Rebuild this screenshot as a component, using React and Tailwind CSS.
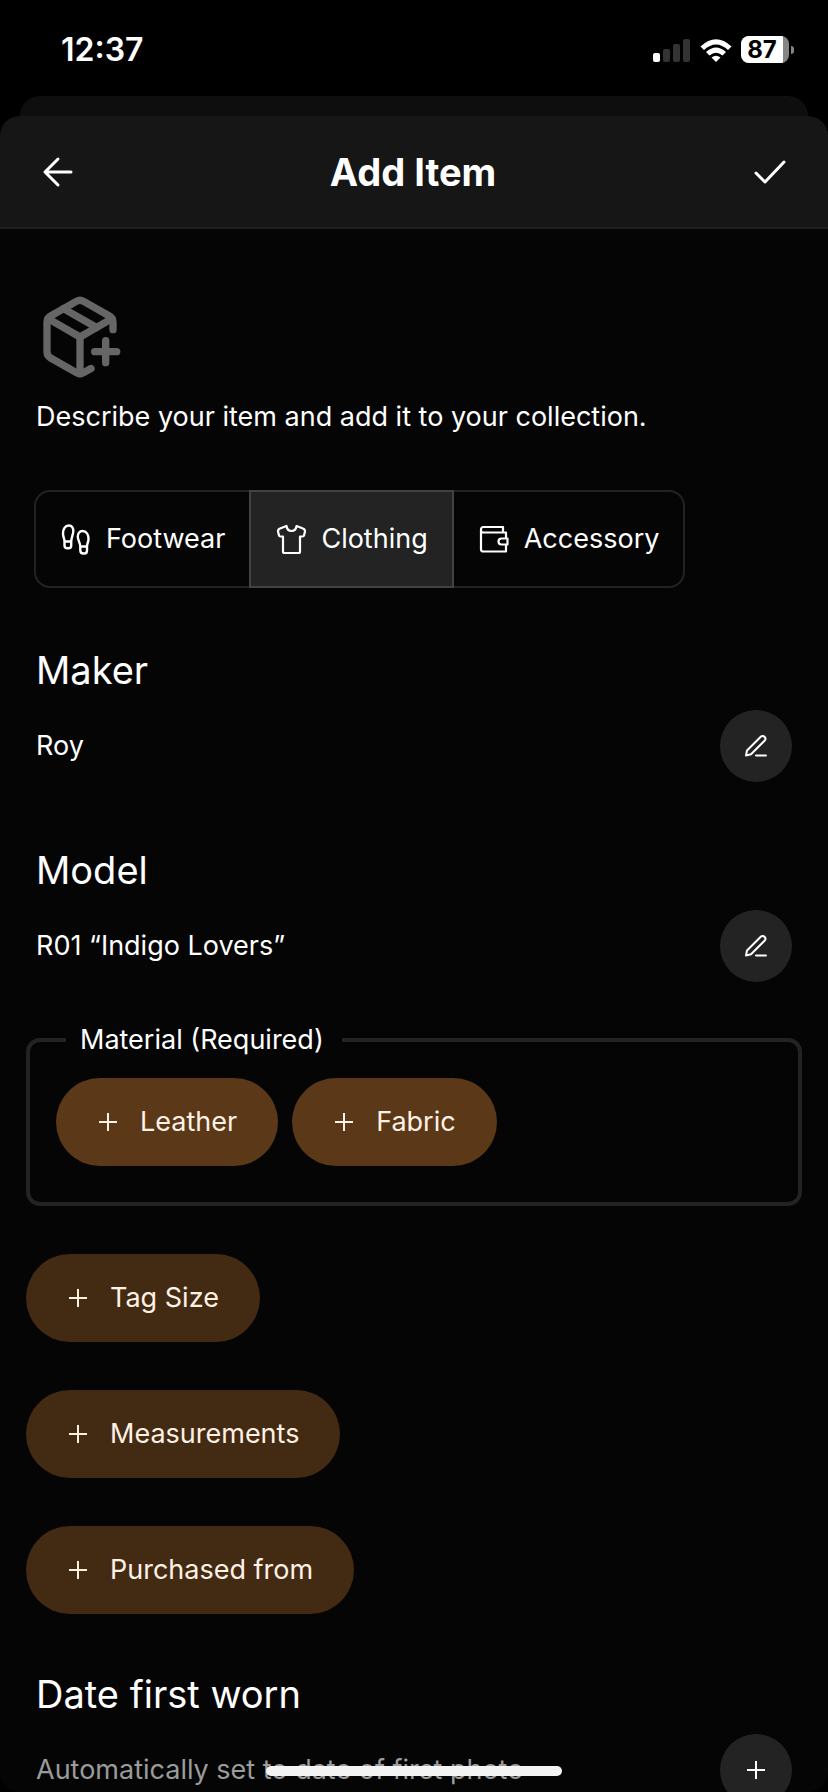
import { useState } from "react";
import { PackagePlus } from "lucide-react";

const categories = [
    { id: "footwear", label: "Footwear", Icon: FootprintsIcon },
    { id: "clothing", label: "Clothing", Icon: ShirtIcon },
    { id: "accessory", label: "Accessory", Icon: WalletIcon },
];

const stroke = {
    fill: "none",
    stroke: "currentColor",
    strokeLinecap: "round",
    strokeLinejoin: "round",
    "aria-hidden": true,
};

function ArrowIcon() {
    return (
        <svg viewBox="0 0 32 32" className="size-8" strokeWidth="3" {...stroke}>
            <path d="M29 16H3M16 3L3 16l13 13" />
        </svg>
    );
}

function CheckIcon() {
    return (
        <svg viewBox="0 0 36 32" className="h-8 w-9" strokeWidth="3" {...stroke}>
            <path d="M4 17l9 9L32 6" />
        </svg>
    );
}

function FootprintsIcon() {
    return (
        <svg viewBox="0 0 32 32" className="size-8" strokeWidth="2.4" {...stroke}>
            <path d="M4.500 18.500C4.500 15.500 3 14 3 10.500C3 6 5 2.500 8.800 2.500C12 2.500 13.500 5 13.300 8.500C13 12 11.200 15 11.200 18.500V22.500C11.200 24.300 10 25.300 8.500 25.300H7.500C5.500 25.300 4.500 24 4.500 22.500ZM4.500 18.500H11.200" />
            <path d="M20.300 23.500C20.300 20 18 17.500 17.800 14C17.600 10.500 19.500 8 22.500 8C26.500 8 28.500 11.500 28.500 16C28.500 19 27 20.500 27 23.500V27.500C27 29.500 26 30.500 24.500 30.500H23.500C21.500 30.500 20.300 29.500 20.300 27.500ZM20.300 23.500H27" />
        </svg>
    );
}

function ShirtIcon() {
    return (
        <svg viewBox="0 0 32 32" className="size-8" strokeWidth="2.2" {...stroke}>
            <path d="M11.500 3C12 6.500 14 8 16.500 8S21 6.500 21.500 3L28 5.500C29.500 6 30 7 30 8.500L29 12.500C28.800 13.300 28.500 13.500 27.500 13.500H25V28.500C25 29.700 24.500 30 23.500 30H9.500C8.500 30 8 29.700 8 28.500V13.500H5.500C4.500 13.500 4.200 13.300 4 12.500L3 8.500C3 7 3.500 6 5 5.500Z" />
        </svg>
    );
}

function WalletIcon() {
    return (
        <svg viewBox="0 0 32 32" className="size-8" strokeWidth="2.2" {...stroke}>
            <path d="M28 15V9.500H5.500M28 22V28.500H5.500C3.800 28.500 3 28 3 26.500V6.500C3 5 3.800 4 5.500 4H25V9.500M5.500 9.500C3.800 9.500 3 8.800 3 7.500" />
            <path d="M29.500 15.500H23.500C21.500 15.500 20.500 17 20.500 18.500S21.500 21.500 23.500 21.500H29.500Z" />
        </svg>
    );
}

function PencilIcon() {
    return (
        <svg viewBox="0 0 24 24" className="size-6" strokeWidth="2" {...stroke}>
            <path d="M12 21.500H22" />
            <path d="M2 21.500L3 16.500L16.500 3C17.800 1.700 19.500 1.700 20.500 2.700S21.700 5.500 20.500 6.800L7 20.300Z" />
        </svg>
    );
}

function PlusIcon() {
    return (
        <svg viewBox="0 0 20 20" className="size-5" fill="none" stroke="currentColor" strokeWidth="2" aria-hidden="true">
            <path d="M1 10H19M10 1V19" />
        </svg>
    );
}

function StatusBar() {
    return (
        <div className="flex h-24 items-start justify-between pt-8 pr-[34px] pl-[61px]">
            <span className="text-[32px] leading-9 font-semibold">12:37</span>
            <div className="flex items-center gap-2 pt-1">
                <svg viewBox="0 0 38 24" className="h-6 w-[38px]" aria-hidden="true">
                    <rect x="0" y="15" width="7" height="9" rx="2" fill="#fff" />
                    <rect x="10" y="11" width="7" height="13" rx="2" fill="#333" />
                    <rect x="20" y="6" width="7" height="18" rx="2" fill="#333" />
                    <rect x="30" y="1" width="7" height="23" rx="2" fill="#333" />
                </svg>
                <svg viewBox="0 0 34 26" className="h-[26px] w-[34px]" aria-hidden="true">
                    <path d="M1.500 9.500Q17-5 32.500 9.500L29 13Q17 2 5 13Z" fill="#fff" />
                    <path d="M7 15Q17 6 27 15L23.500 18.500Q17 13 10.500 18.500Z" fill="#fff" />
                    <path d="M12.500 20.500Q17 17 21.500 20.500L17 25Z" fill="#fff" />
                </svg>
                <div className="flex items-center gap-0.5">
                    <div className="h-[27px] w-12 overflow-hidden rounded-lg bg-[#858585]">
                        <div className="flex h-full w-[42px] items-center justify-center bg-white text-[24px] font-bold text-black">87</div>
                    </div>
                    <div className="h-2 w-[3px] rounded-r-full bg-[#858585]" />
                </div>
            </div>
        </div>
    );
}

function Field({ title, value, muted, action, children }) {
    return (
        <section className="px-9">
            <h2 className="text-[38px] leading-12">{title}</h2>
            <div className="mt-4 flex h-18 items-center justify-between">
                <p className={muted ? "text-[#9b9b9b]" : ""}>{value}</p>
                <button type="button" aria-label={action} className="flex size-18 items-center justify-center rounded-full bg-[#232323]">
                    {children}
                </button>
            </div>
        </section>
    );
}

function Chip({ label, className }) {
    return (
        <button type="button" className={`flex h-22 items-center gap-[22px] rounded-full pr-[41px] pl-[42px] text-[#fff1e4] ${className}`}>
            <PlusIcon />
            {label}
        </button>
    );
}

export default function App() {
    const [category, setCategory] = useState("clothing");

    return (
        <div className="h-screen overflow-hidden bg-black font-['Inter','Liberation_Sans',sans-serif] text-[27px] leading-9 text-white">
            <StatusBar />
            <div className="mx-5 h-5 rounded-t-[20px] bg-[#0e0e0e]" />

            <div className="h-[calc(100vh-116px)] overflow-hidden rounded-[20px] bg-[#050505]">
                <header className="flex h-[113px] items-center justify-between border-b-2 border-[#1e1e1e] bg-[#161616] pr-10 pl-[42px]">
                    <button type="button" aria-label="Back"><ArrowIcon /></button>
                    <h1 className="text-[38px] font-bold">Add Item</h1>
                    <button type="button" aria-label="Save"><CheckIcon /></button>
                </header>

                <main>
                    <div className="px-9 pt-16">
                        <PackagePlus className="size-22 text-[#666]" strokeWidth={2} />
                        <p className="mt-[18px]">Describe your item and add it to your collection.</p>
                    </div>

                    <div className="mt-[55px] ml-[34px] flex h-[98px] w-fit">
                        {categories.map(({ id, label, Icon }) => (
                            <button
                                key={id}
                                type="button"
                                aria-pressed={category === id}
                                onClick={() => setCategory(id)}
                                className={`-ml-0.5 flex items-center gap-3.5 border-2 px-6 first:ml-0 first:rounded-l-2xl last:rounded-r-2xl ${
                                    category === id ? "z-10 border-[#424242] bg-[#232323]" : "border-[#232323]"
                                }`}
                            >
                                <Icon />
                                {label}
                            </button>
                        ))}
                    </div>

                    <div className="mt-[58px] flex flex-col gap-16">
                        <Field title="Maker" value="Roy" action="Edit maker"><PencilIcon /></Field>
                        <Field title="Model" value="R01 “Indigo Lovers”" action="Edit model"><PencilIcon /></Field>
                    </div>

                    <fieldset className="mx-[26px] mt-10 rounded-[14px] border-4 border-[#232323] px-[26px] pb-9">
                        <legend className="ml-2.5 pr-[18px] pl-3.5">Material (Required)</legend>
                        <div className="mt-5 flex gap-3.5">
                            <Chip label="Leather" className="bg-[#5a3818]" />
                            <Chip label="Fabric" className="bg-[#5a3818]" />
                        </div>
                    </fieldset>

                    <div className="mt-12 mb-14 ml-[26px] flex flex-col items-start gap-12">
                        <Chip label="Tag Size" className="bg-[#432a13]" />
                        <Chip label="Measurements" className="bg-[#432a13]" />
                        <Chip label="Purchased from" className="bg-[#432a13]" />
                    </div>

                    <Field title="Date first worn" value="Automatically set to date of first photo" action="Add date first worn" muted>
                        <PlusIcon />
                    </Field>
                </main>
            </div>

            {/* home indicator */}
            <div className="fixed bottom-4 left-1/2 h-2.5 w-74 -translate-x-1/2 rounded-full bg-[#f3f3f3]" />
        </div>
    );
}
